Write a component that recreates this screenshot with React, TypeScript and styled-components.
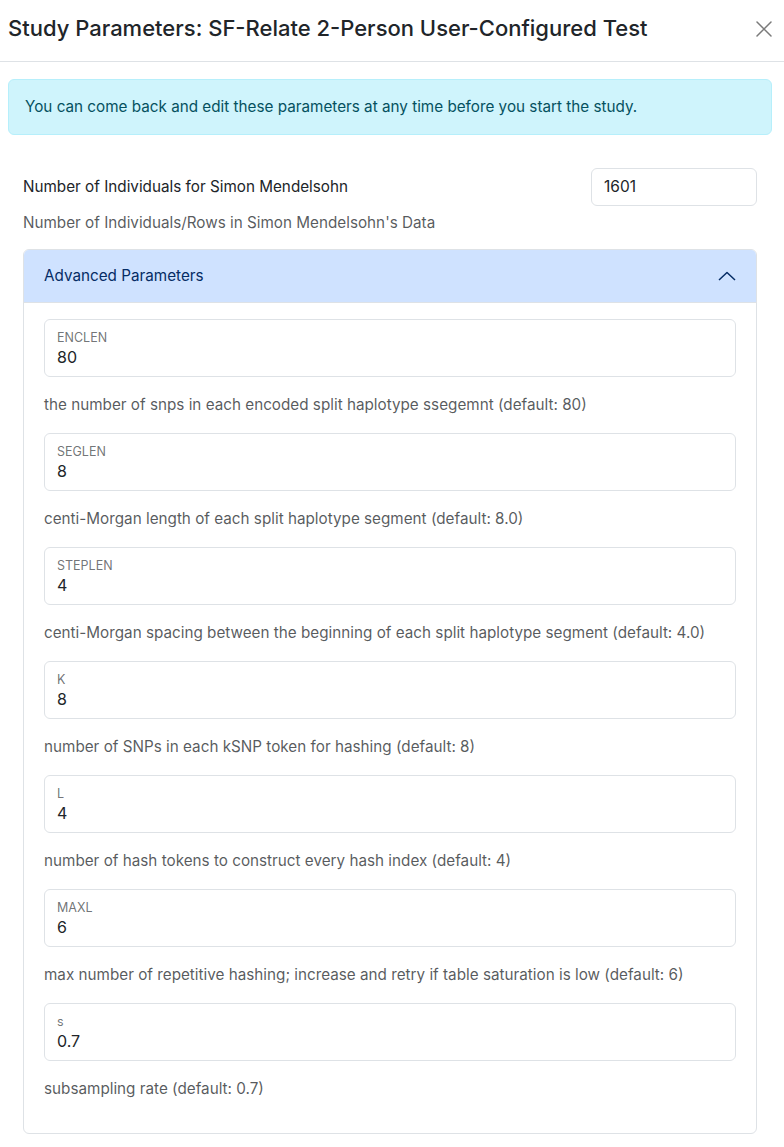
import React from "react";
import styled, { createGlobalStyle } from "styled-components";

const GlobalStyle = createGlobalStyle`
  * { box-sizing: border-box; }
  html, body { margin: 0; padding: 0; background: #fff; }
  body {
    font-family: Inter, "Noto Sans", "Liberation Sans", sans-serif;
    font-size: 15.25px;
    line-height: 1.5;
    color: #212529;
  }
`;

const Modal = styled.div`
  width: 784px;
  background: #fff;
`;

const Header = styled.header`
  display: flex;
  align-items: center;
  justify-content: space-between;
  height: 62px;
  padding: 0 8px 4px 8px;
  border-bottom: 1px solid #dee2e6;
`;

const Title = styled.h5`
  margin: 0;
  font-size: 22px;
  font-weight: 500;
  line-height: 1.5;
  color: #212529;
`;

const CloseButton = styled.button`
  width: 24px;
  height: 24px;
  padding: 0;
  border: 0;
  background: transparent;
  display: flex;
  align-items: center;
  justify-content: center;
  cursor: pointer;
`;

const Body = styled.div`
  padding: 17px 12px 16px 8px;
`;

const Alert = styled.div`
  padding: 15px 16px;
  margin-bottom: 33px;
  background: #cff4fc;
  border: 1px solid #b6effb;
  border-radius: 6px;
  color: #055160;
  font-size: 15.25px;
  line-height: 24px;
`;

const Section = styled.div`
  padding: 0 15px;
`;

const FieldRow = styled.div`
  display: flex;
  align-items: center;
  justify-content: space-between;
`;

const FieldLabel = styled.label`
  font-size: 15.25px;
  color: #212529;
`;

const SmallInput = styled.div`
  width: 166px;
  height: 38px;
  padding: 6px 12px;
  border: 1px solid #dee2e6;
  border-radius: 6px;
  font-size: 15.5px;
  line-height: 24px;
  color: #212529;
`;

const HelpText = styled.div`
  margin-top: 5px;
  margin-bottom: 14px;
  font-size: 15.25px;
  line-height: 24px;
  color: rgba(33, 37, 41, 0.75);
`;

const Accordion = styled.div`
  border: 1px solid #dee2e6;
  border-radius: 6px;
  overflow: hidden;
`;

const AccordionHeader = styled.div`
  display: flex;
  align-items: center;
  justify-content: space-between;
  height: 53px;
  padding: 0 20px;
  background: #cfe2ff;
  color: #052c65;
  font-size: 15.25px;
  border-bottom: 1px solid #dee2e6;
`;

const AccordionBody = styled.div`
  padding: 16px 20px 16px 20px;
`;

const Floating = styled.div`
  height: 58px;
  padding: 8px 12px 0 12px;
  border: 1px solid #dee2e6;
  border-radius: 6px;
  display: flex;
  flex-direction: column;
`;

const FloatLabel = styled.span`
  font-size: 12.5px;
  line-height: 20px;
  color: rgba(33, 37, 41, 0.65);
`;

const FloatValue = styled.span`
  font-size: 16px;
  line-height: 24px;
  margin-top: -3px;
  color: #212529;
`;

const Description = styled.div`
  margin: 16px 0;
  font-size: 15.25px;
  line-height: 24px;
  color: rgba(33, 37, 41, 0.75);
`;

const params = [
  { name: "ENCLEN", value: "80", desc: "the number of snps in each encoded split haplotype ssegemnt (default: 80)" },
  { name: "SEGLEN", value: "8", desc: "centi-Morgan length of each split haplotype segment (default: 8.0)" },
  { name: "STEPLEN", value: "4", desc: "centi-Morgan spacing between the beginning of each split haplotype segment (default: 4.0)" },
  { name: "K", value: "8", desc: "number of SNPs in each kSNP token for hashing (default: 8)" },
  { name: "L", value: "4", desc: "number of hash tokens to construct every hash index (default: 4)" },
  { name: "MAXL", value: "6", desc: "max number of repetitive hashing; increase and retry if table saturation is low (default: 6)" },
  { name: "s", value: "0.7", desc: "subsampling rate (default: 0.7)" },
];

export default function App() {
  return (
    <Modal>
      <GlobalStyle />
      <Header>
        <Title>Study Parameters: SF-Relate 2-Person User-Configured Test</Title>
        <CloseButton aria-label="Close">
          <svg width="16" height="16" viewBox="0 0 16 16">
            <path d="M1 1L15 15M15 1L1 15" stroke="#7a7a7a" strokeWidth="1.5" strokeLinecap="round" />
          </svg>
        </CloseButton>
      </Header>
      <Body>
        <Alert>You can come back and edit these parameters at any time before you start the study.</Alert>
        <Section>
          <FieldRow>
            <FieldLabel>Number of Individuals for Simon Mendelsohn</FieldLabel>
            <SmallInput>1601</SmallInput>
          </FieldRow>
          <HelpText>Number of Individuals/Rows in Simon Mendelsohn's Data</HelpText>
          <Accordion>
            <AccordionHeader>
              <span>Advanced Parameters</span>
              <svg width="18" height="10" viewBox="0 0 18 10">
                <path d="M1 9L9 1.5L17 9" fill="none" stroke="#052c65" strokeWidth="1.5" strokeLinejoin="round" />
              </svg>
            </AccordionHeader>
            <AccordionBody>
              {params.map((p) => (
                <div key={p.name}>
                  <Floating>
                    <FloatLabel>{p.name}</FloatLabel>
                    <FloatValue>{p.value}</FloatValue>
                  </Floating>
                  <Description>{p.desc}</Description>
                </div>
              ))}
            </AccordionBody>
          </Accordion>
        </Section>
      </Body>
    </Modal>
  );
}
